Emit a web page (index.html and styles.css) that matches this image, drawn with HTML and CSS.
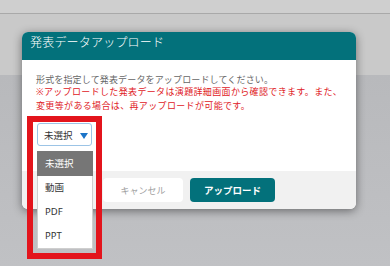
FILE: index.html
```html
<!DOCTYPE html>
<html lang="ja">
<head>
    <meta charset="UTF-8">
    <meta name="viewport" content="width=device-width, initial-scale=1.0">
    <title>発表データアップロード</title>
    <link rel="stylesheet" href="styles.css">
</head>
<body>
    <div class="backdrop">
        <div class="topbar"></div>
        <div class="band"></div>
        <div class="rest"></div>
    </div>

    <!-- アップロードダイアログ -->
    <div class="modal">
        <div class="modal-header">発表データアップロード</div>
        <div class="modal-body">
            <p class="note">形式を指定して発表データをアップロードしてください。</p>
            <p class="warn">※アップロードした発表データは演題詳細画面から確認できます。また、<br>変更等がある場合は、再アップロードが可能です。</p>
            <div class="select-box">
                <span>未選択</span>
                <span class="select-arrow"></span>
            </div>
        </div>
        <div class="modal-footer">
            <button class="btn btn-cancel">キャンセル</button>
            <button class="btn btn-upload">アップロード</button>
        </div>
    </div>

    <!-- 開いたセレクトのリスト -->
    <ul class="option-list">
        <li class="option selected">未選択</li>
        <li class="option">動画</li>
        <li class="option">PDF</li>
        <li class="option">PPT</li>
    </ul>

    <!-- 注釈の赤枠 -->
    <div class="highlight"></div>
</body>
</html>
```

FILE: styles.css
```css
/* 基本スタイル */
body {
    margin: 0;
    padding: 0;
    font-family: "Noto Sans", "Noto Sans CJK JP", sans-serif;
    color: #333;
    overflow: hidden;
}

/* 背景 */
.backdrop {
    height: 266px;
    display: flex;
    flex-direction: column;
}
.topbar {
    height: 13px;
    background: #cfcfcf;
    border-bottom: 1px solid #a9a9a9;
}
.band {
    height: 61px;
    background: #c9c9c9;
}
.rest {
    flex: 1;
    background: linear-gradient(#b8b9bc, #c0c1c4);
}

/* ダイアログ */
.modal {
    position: absolute;
    left: 22px;
    top: 32px;
    width: 334px;
    border-radius: 6px;
    overflow: hidden;
    background: #fff;
    box-shadow: 0 2px 10px rgba(0,0,0,0.45);
}
.modal-header {
    height: 28px;
    line-height: 22px;
    padding: 0 8px;
    background: #03717b;
    color: #fff;
    font-size: 12px;
    font-weight: 300;
    letter-spacing: 0.2px;
}
.modal-body {
    height: 111px;
    box-sizing: border-box;
    padding: 14px 10px 0 14px;
}
.note {
    margin: 0;
    font-size: 9px;
    line-height: 11px;
    letter-spacing: 0.15px;
    color: #666;
    white-space: nowrap;
}
.warn {
    margin: 0;
    font-size: 9px;
    line-height: 13.5px;
    letter-spacing: 0.35px;
    color: #e0201e;
    white-space: nowrap;
}
.select-box {
    margin: 11px 0 0 1px;
    width: 55px;
    height: 23px;
    box-sizing: border-box;
    border: 1px solid #9cc4e6;
    border-radius: 3px;
    display: flex;
    align-items: center;
    justify-content: space-between;
    padding: 0 3px 0 6px;
    font-size: 9.5px;
}
.select-arrow {
    width: 0;
    height: 0;
    border-left: 4.5px solid transparent;
    border-right: 4.5px solid transparent;
    border-top: 6px solid #1c74c8;
    margin-top: 2px;
}
.modal-footer {
    height: 38px;
    background: #f1f1f1;
    display: flex;
    justify-content: center;
    align-items: center;
    gap: 7px;
}
.btn {
    height: 24px;
    border: none;
    border-radius: 4px;
    font-family: inherit;
    font-size: 9px;
    cursor: pointer;
}
.btn-cancel {
    width: 80px;
    background: #fff;
    color: #a0a0a0;
}
.btn-upload {
    width: 85px;
    background: #03717b;
    color: #fff;
    font-weight: bold;
    font-size: 9.5px;
}

/* セレクトのリスト */
.option-list {
    position: absolute;
    left: 37px;
    top: 151px;
    width: 56px;
    box-sizing: border-box;
    margin: 0;
    padding: 0;
    list-style: none;
    background: #fff;
    border: 1px solid #cfcfcf;
    border-top: none;
}
.option {
    height: 24px;
    line-height: 24px;
    padding-left: 7px;
    font-size: 9.5px;
    color: #333;
}
.option.selected {
    height: 25px;
    line-height: 25px;
    background: #767676;
    color: #fff;
    margin: 0 -1px;
    padding-left: 8px;
}

/* 赤枠 */
.highlight {
    position: absolute;
    left: 27px;
    top: 116px;
    width: 75px;
    height: 143px;
    box-sizing: border-box;
    border: 6.5px solid #e3141c;
}
```
